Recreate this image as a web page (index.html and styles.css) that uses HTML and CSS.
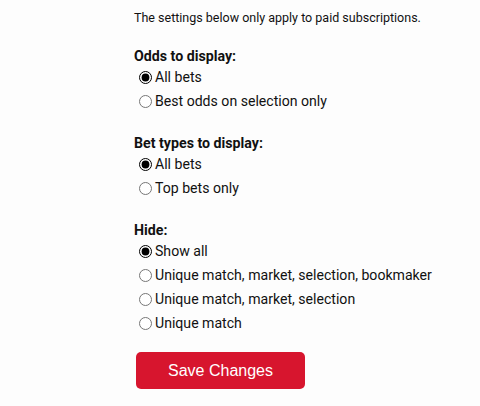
FILE: index.html
```html
<!DOCTYPE html>
<html>

<head>
    <title>Settings</title>
    <link rel="stylesheet" href="styles.css">
</head>

<body>
    <div class="settings">
        <p class="note">The settings below only apply to paid subscriptions.</p>

        <div class="group">
            <h3>Odds to display:</h3>
            <label class="option"><input type="radio" name="odds" checked> All bets</label>
            <label class="option"><input type="radio" name="odds"> Best odds on selection only</label>
        </div>

        <div class="group">
            <h3>Bet types to display:</h3>
            <label class="option"><input type="radio" name="types" checked> All bets</label>
            <label class="option"><input type="radio" name="types"> Top bets only</label>
        </div>

        <div class="group">
            <h3>Hide:</h3>
            <label class="option"><input type="radio" name="hide" checked> Show all</label>
            <label class="option"><input type="radio" name="hide"> Unique match, market, selection, bookmaker</label>
            <label class="option"><input type="radio" name="hide"> Unique match, market, selection</label>
            <label class="option"><input type="radio" name="hide"> Unique match</label>
        </div>

        <button class="save">Save Changes</button>
    </div>
</body>

</html>
```

FILE: styles.css
```css
body {
    font-family: Roboto, "Liberation Sans", sans-serif;
    margin: 0;
    padding: 0;
    background-color: #fdfdfd;
    color: #111;
}

.settings {
    padding: 9px 0 0 134px;
}

.note {
    font-size: 12.5px;
    line-height: 17px;
    margin: 0;
}

.group {
    margin-top: 21px;
}

.group h3 {
    font-size: 14.2px;
    line-height: 18px;
    margin: 0;
}

.option {
    display: flex;
    align-items: center;
    height: 24px;
    font-size: 14.1px;
}

.option input {
    margin: 0 3px 0 5px;
    width: 13px;
    height: 13px;
    accent-color: #000;
}

.save {
    margin: 17px 0 0 2px;
    width: 169px;
    height: 37px;
    border: none;
    border-radius: 5px;
    background-color: #d7152e;
    color: #fff;
    font-family: "Liberation Sans", Arial, sans-serif;
    font-size: 16px;
}
```
